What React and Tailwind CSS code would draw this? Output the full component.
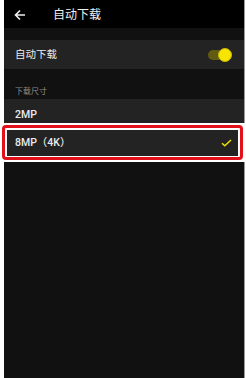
import React from "react";

const font = { fontFamily: 'Roboto, "Noto Sans CJK SC", sans-serif' };

export default function App() {
  return (
    <div className="w-[246px] h-[378px] bg-white overflow-hidden" style={font}>
      <div className="ml-[4px] w-[241px] h-[378px] bg-[#111111] border-r border-[#9a9a9a] flex flex-col">
        {/* header */}
        <div className="h-[28px] bg-black flex items-center pt-[2px]">
          <svg width="12" height="12" viewBox="0 0 12 12" className="ml-[10px]">
            <path d="M11 6H1.8M6 1.5L1.5 6L6 10.5" stroke="#f0f0f0" strokeWidth="1.6" fill="none" />
          </svg>
          <span className="ml-[27px] text-[12px] leading-none text-[#f0f0f0]">自动下载</span>
        </div>
        <div className="h-[12px]" />
        {/* auto download row */}
        <div className="h-[29px] bg-[#232323] flex items-center justify-between pl-[11px] pr-[12px] pt-[1px]">
          <span className="text-[10.5px] leading-none text-[#ececec]">自动下载</span>
          <div className="relative w-[24px] h-[14px] flex items-center">
            <div className="w-[16px] h-[10px] rounded-full bg-[#615b12]" />
            <div className="absolute right-0 top-0 w-[14px] h-[14px] rounded-full bg-[#f7e400] border border-[#c9b800]" />
          </div>
        </div>
        {/* section label */}
        <div className="h-[30px] flex items-end pl-[11px] pb-[3px]">
          <span className="text-[8px] leading-none text-[#8c8c8c]">下载尺寸</span>
        </div>
        <div className="h-[24px] bg-[#232323] flex items-center pl-[11px] pt-[9px]">
          <span className="text-[10.5px] leading-none font-medium text-[#ececec]">2MP</span>
        </div>
        {/* highlighted row */}
        <div className="-ml-[4px] w-[245px] bg-white p-[2px]">
          <div className="border-[3px] border-[#e2101b] rounded-[4px] bg-white px-[2px] pt-[2px] pb-[1px]">
            <div className="h-[26px] bg-[#232323] flex items-center justify-between pl-[8px] pr-[6px]">
              <span className="text-[10.5px] leading-none font-medium text-[#ececec]">8MP（4K）</span>
              <svg width="11" height="8" viewBox="0 0 11 8">
                <path d="M1 4.2L3.8 6.8L10 1" stroke="#f2df00" strokeWidth="1.5" fill="none" />
              </svg>
            </div>
          </div>
        </div>
        <div className="flex-1" />
      </div>
    </div>
  );
}
